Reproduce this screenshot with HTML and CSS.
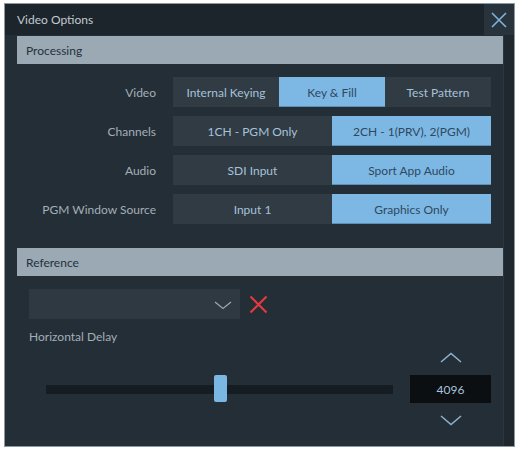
FILE: index.html
```html
<!DOCTYPE html>
<html>
<head>
<meta charset="utf-8">
<link rel="stylesheet" href="styles.css">
</head>
<body>
<div class="window">
  <div class="titlebar">
    <span class="title">Video Options</span>
    <div class="close">
      <svg width="18" height="18" viewBox="0 0 18 18"><path d="M2 2 L16 16 M16 2 L2 16" stroke="#7eb3dc" stroke-width="1.6" fill="none"/></svg>
    </div>
  </div>
  <div class="content">
    <div class="main">
      <div class="section-head">Processing</div>
      <div class="rows">
        <div class="row">
          <div class="label">Video</div>
          <div class="group three">
            <div class="btn">Internal Keying</div>
            <div class="btn on">Key &amp; Fill</div>
            <div class="btn">Test Pattern</div>
          </div>
        </div>
        <div class="row">
          <div class="label">Channels</div>
          <div class="group two">
            <div class="btn">1CH - PGM Only</div>
            <div class="btn on">2CH - 1(PRV), 2(PGM)</div>
          </div>
        </div>
        <div class="row">
          <div class="label">Audio</div>
          <div class="group two">
            <div class="btn">SDI Input</div>
            <div class="btn on">Sport App Audio</div>
          </div>
        </div>
        <div class="row">
          <div class="label">PGM Window Source</div>
          <div class="group two">
            <div class="btn">Input 1</div>
            <div class="btn on">Graphics Only</div>
          </div>
        </div>
      </div>
      <div class="section-head ref">Reference</div>
      <div class="ref-body">
        <div class="select-row">
          <div class="select">
            <svg width="18" height="9" viewBox="0 0 18 9"><path d="M1 1 L9 7.5 L17 1" stroke="#9aa8b3" stroke-width="1.3" fill="none"/></svg>
          </div>
          <svg class="clear" width="19" height="19" viewBox="0 0 19 19"><path d="M1.5 1.5 L17.5 17.5 M17.5 1.5 L1.5 17.5" stroke="#e23a40" stroke-width="2.2" fill="none"/></svg>
        </div>
        <div class="field-label">Horizontal Delay</div>
        <div class="slider-row">
          <div class="slider">
            <div class="track"></div>
            <div class="thumb" style="left: 48.5%"></div>
          </div>
          <div class="spinner">
            <svg width="22" height="11" viewBox="0 0 22 11"><path d="M1 10 L11 1.5 L21 10" stroke="#8fb2cf" stroke-width="1.5" fill="none"/></svg>
            <div class="value">4096</div>
            <svg width="22" height="11" viewBox="0 0 22 11"><path d="M1 1 L11 9.5 L21 1" stroke="#8fb2cf" stroke-width="1.5" fill="none"/></svg>
          </div>
        </div>
      </div>
    </div>
    <div class="scrolltrack"></div>
  </div>
</div>
</body>
</html>
```
FILE: styles.css
```css
html, body {
  margin: 0;
  padding: 0;
  background: #ffffff;
}
body {
  font-family: Lato, "Open Sans", sans-serif;
  font-size: 12px;
}
.window {
  margin: 3px 0 0 4px;
  width: 509px;
  height: 442px;
  border: 1px solid #8d99a2;
  background: #242e36;
  display: flex;
  flex-direction: column;
  overflow: hidden;
}
.titlebar {
  height: 31px;
  flex: none;
  background: #1c252c;
  display: flex;
  align-items: center;
  justify-content: space-between;
}
.title {
  padding-left: 12px;
  color: #c3cad0;
  font-size: 12px;
}
.close {
  width: 30px;
  height: 31px;
  background: #29333b;
  display: flex;
  align-items: center;
  justify-content: center;
}
.content {
  flex: 1;
  display: flex;
}
.main {
  flex: 1;
  padding: 1px 0 0 12px;
}
.scrolltrack {
  width: 11px;
  background: #1f282f;
  border-left: 1px solid #2c363e;
}
.section-head {
  height: 28px;
  background: #9aa9b4;
  color: #26313a;
  font-size: 12px;
  display: flex;
  align-items: center;
  padding-left: 9px;
}
.rows {
  display: flex;
  flex-direction: column;
  gap: 9px;
  padding: 13px 12px 0 0;
}
.row {
  display: flex;
  align-items: center;
  height: 30px;
}
.label {
  width: 139px;
  text-align: right;
  color: #a3afb8;
  padding-right: 17px;
}
.group {
  flex: 1;
  display: grid;
  height: 30px;
}
.group.three { grid-template-columns: 1fr 1fr 1fr; }
.group.two { grid-template-columns: 1fr 1fr; }
.btn {
  background: #303b43;
  color: #a6c2da;
  display: flex;
  align-items: center;
  justify-content: center;
  white-space: nowrap;
}
.btn.on {
  background: #7db8e5;
  color: #2f485c;
  box-shadow: inset 0 -1px 0 #5d8fb4;
}
.section-head.ref {
  margin-top: 24px;
}
.ref-body {
  padding: 13px 12px 0 12px;
}
.select-row {
  display: flex;
  align-items: center;
  gap: 9px;
}
.select {
  width: 211px;
  height: 30px;
  background: #2e3941;
  display: flex;
  align-items: center;
  justify-content: flex-end;
  padding-right: 8px;
  box-sizing: border-box;
}
.select svg { margin-top: 2px; }
.clear { flex: none; }
.field-label {
  margin-top: 9px;
  color: #a3afb8;
  font-size: 12px;
  line-height: 17px;
}
.slider-row {
  display: flex;
  align-items: center;
  gap: 17px;
  margin-top: 7px;
  padding-left: 17px;
}
.slider {
  position: relative;
  width: 347px;
  height: 28px;
  display: flex;
  align-items: center;
}
.track {
  width: 100%;
  height: 9px;
  background: #151d23;
}
.thumb {
  position: absolute;
  top: 0;
  width: 13px;
  height: 27px;
  background: #7ab7e3;
  border-radius: 2px;
}
.spinner {
  width: 81px;
  display: flex;
  flex-direction: column;
  align-items: center;
  gap: 12px;
}
.value {
  width: 81px;
  height: 28px;
  background: #0b0f12;
  color: #a9c3da;
  display: flex;
  align-items: center;
  justify-content: center;
  font-size: 12px;
}
```
